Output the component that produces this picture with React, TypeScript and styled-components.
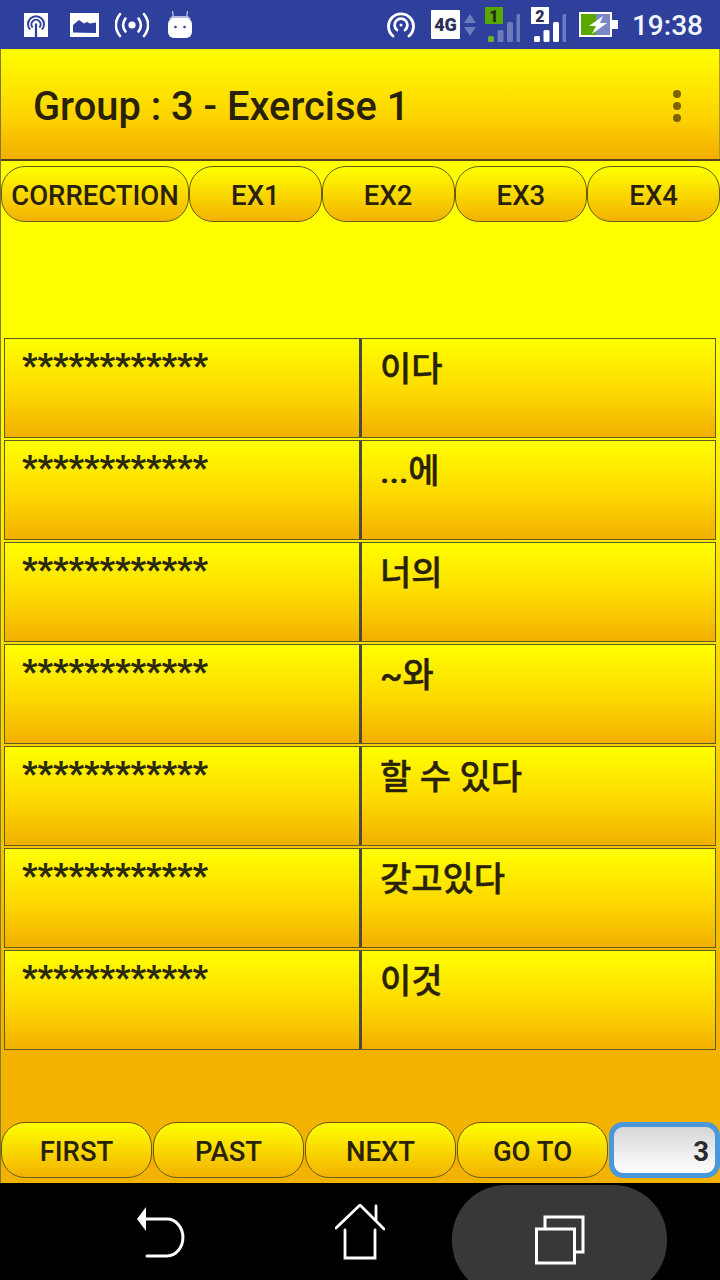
import React from 'react';
import styled, { createGlobalStyle } from 'styled-components';

const GlobalStyle = createGlobalStyle`
  html, body {
    margin: 0;
    padding: 0;
    background: #000;
  }
  * {
    box-sizing: border-box;
  }
`;

const YELLOW_DOWN = 'linear-gradient(180deg, #ffff00 0%, #fdd800 55%, #f2b000 100%)';
const KOREAN = '"Roboto", "Noto Sans CJK KR", sans-serif';

const rows = ['이다', '...에', '너의', '~와', '할 수 있다', '갖고있다', '이것'];
const tabs = ['EX1', 'EX2', 'EX3', 'EX4'];
const pager = ['FIRST', 'PAST', 'NEXT', 'GO TO'];

function HotspotSquare() {
  return (
    <StatusIcon $w={24} $h={24} $ml={24} viewBox="0 0 24 24">
      <rect width="24" height="24" fill="#fff" />
      <g fill="none" stroke="#2e3f9c" strokeWidth="2">
        <path d="M6 16.500a8 8 0 1 1 12 0" />
        <path d="M8.600 14.500a4.600 4.600 0 1 1 6.800 0" />
      </g>
      <path d="M12 10.500V24" stroke="#2e3f9c" strokeWidth="2.200" />
    </StatusIcon>
  );
}

function PictureIcon() {
  return (
    <StatusIcon $w={29} $h={24} $ml={22} viewBox="0 0 29 24">
      <rect width="29" height="24" fill="#fff" />
      <path d="M3 19.500V12l6-5 5 3.500 3-1.500 3 1.500 6-1v10.500z" fill="#2e3f9c" />
    </StatusIcon>
  );
}

function BroadcastIcon() {
  return (
    <StatusIcon $w={34} $h={26} $ml={16} viewBox="0 0 34 26">
      <circle cx="17" cy="13" r="3.600" fill="#fff" />
      <g fill="none" stroke="#fff" strokeWidth="2.600" strokeLinecap="round">
        <path d="M10.500 6.500c-3 4-3 9 0 13" />
        <path d="M23.500 6.500c3 4 3 9 0 13" />
        <path d="M5 2c-5.300 7-5.300 15 0 22" />
        <path d="M29 2c5.300 7 5.300 15 0 22" />
      </g>
    </StatusIcon>
  );
}

function AndroidIcon() {
  return (
    <StatusIcon $w={24} $h={28} $ml={19} viewBox="0 0 24 28">
      <path d="M5.500 6.500 4.500 0M18.500 6.500 19.500 0" stroke="#c8cdea" strokeWidth="1.200" />
      <path d="M4 5h16l3 3H1z" fill="#b4bbe2" />
      <rect y="7" width="24" height="20" rx="6" fill="#fff" />
      <circle cx="7.500" cy="16" r="1.300" fill="#2e3f9c" />
      <circle cx="16.500" cy="16" r="1.300" fill="#2e3f9c" />
    </StatusIcon>
  );
}

function WifiRingIcon() {
  return (
    <StatusIcon $w={28} $h={26} $ml={0} viewBox="0 0 28 26">
      <g fill="none" stroke="#fff" strokeWidth="2.800" strokeLinecap="round">
        <path d="M6 24a12.500 12.500 0 1 1 16 0" />
        <path d="M10 18a6.400 6.400 0 1 1 8 0" />
      </g>
      <circle cx="14" cy="13" r="1.500" fill="#fff" />
    </StatusIcon>
  );
}

function NetworkIcon() {
  return (
    <StatusIcon $w={45} $h={29} $ml={16} viewBox="0 0 45 29">
      <rect width="29" height="29" fill="#fff" rx="1" />
      <text x="14.500" y="21" textAnchor="middle" fontFamily="Roboto, sans-serif" fontWeight="900" fontSize="18" fill="#2a2f55">
        4G
      </text>
      <path d="M33 13 39 4l6 9zM33 17h12l-6 9z" fill="#6d7bbd" />
    </StatusIcon>
  );
}

function SimSignal({ sim, active, ml }: { sim: string; active?: boolean; ml: number }) {
  const heightOf = [6, 12, 20, 28];
  const filled = active ? 1 : 3;
  return (
    <StatusIcon $w={35} $h={36} $ml={ml} viewBox="0 0 35 36">
      <rect x="0" y="0" width="18" height="17" fill={active ? '#5aa700' : '#fff'} />
      <text x="9" y="14.500" textAnchor="middle" fontFamily="Roboto, sans-serif" fontWeight="900" fontSize="16" fill={active ? '#1f2f10' : '#2a2f55'}>
        {sim}
      </text>
      {heightOf.map((h, i) => (
        <rect
          key={h}
          x={3 + i * 9.500}
          y={35 - h}
          width="6"
          height={h}
          rx="1.500"
          fill={i < filled ? (active ? '#6cb52a' : '#fff') : '#6d7bbd'}
        />
      ))}
    </StatusIcon>
  );
}

function BatteryIcon() {
  return (
    <StatusIcon $w={39} $h={25} $ml={13} viewBox="0 0 39 25">
      <rect x="1" y="1" width="31" height="23" fill="#7c87c6" stroke="#fff" strokeWidth="2" />
      <rect x="2" y="2" width="15" height="21" fill="#5aa700" />
      <rect x="33" y="8" width="6" height="9" fill="#fff" />
      <path d="M24 4 10 14h7l-4 8 15-11h-7z" fill="#fff" />
    </StatusIcon>
  );
}

function BackGlyph() {
  return (
    <NavSvg width="48" height="53" viewBox="0 0 48 53">
      <path d="M0 14 9 2v24z" fill="#fff" />
      <path d="M8 14h22a15.500 18 0 0 1 0 37H10" fill="none" stroke="#fff" strokeWidth="3" strokeLinecap="round" />
    </NavSvg>
  );
}

function HomeGlyph() {
  return (
    <NavSvg width="50" height="56" viewBox="0 0 50 56">
      <g fill="none" stroke="#fff" strokeWidth="2.800" strokeLinecap="round">
        <path d="M1 24 25 1l24 24" />
        <path d="M41 2v14" />
        <path d="M10 26v28h30V26" />
      </g>
    </NavSvg>
  );
}

function RecentsGlyph() {
  return (
    <NavSvg width="50" height="50" viewBox="0 0 50 50">
      <g fill="none" stroke="#fff" strokeWidth="3">
        <rect x="1.500" y="14" width="38" height="34" />
        <path d="M10 13V2h38v35h-7" />
      </g>
    </NavSvg>
  );
}

export default function App() {
  return (
    <>
      <GlobalStyle />
      <Screen>
        <StatusBar>
          <StatusGroup>
            <HotspotSquare />
            <PictureIcon />
            <BroadcastIcon />
            <AndroidIcon />
          </StatusGroup>
          <StatusGroup>
            <WifiRingIcon />
            <NetworkIcon />
            <SimSignal sim="1" active ml={9} />
            <SimSignal sim="2" ml={11} />
            <BatteryIcon />
            <Clock>19:38</Clock>
          </StatusGroup>
        </StatusBar>

        <AppBody>
          <AppBar>
            <Title>Group : 3 - Exercise 1</Title>
            <OverflowMenu>
              <Dot />
              <Dot />
              <Dot />
            </OverflowMenu>
          </AppBar>

          <Content>
            <TabRow>
              <PillButton $wide>CORRECTION</PillButton>
              {tabs.map((tab) => (
                <PillButton key={tab}>{tab}</PillButton>
              ))}
            </TabRow>

            <Table>
              {rows.map((word) => (
                <Row key={word}>
                  <HiddenCell>************</HiddenCell>
                  <Divider />
                  <WordCell>{word}</WordCell>
                </Row>
              ))}
            </Table>

            <Pager>
              {pager.map((label) => (
                <PillButton key={label}>{label}</PillButton>
              ))}
              <PageInput>3</PageInput>
            </Pager>
          </Content>
        </AppBody>

        <NavBar>
          <NavSlot>
            <BackGlyph />
          </NavSlot>
          <NavSlot>
            <HomeGlyph />
          </NavSlot>
          <RecentsPill>
            <RecentsGlyph />
          </RecentsPill>
        </NavBar>
      </Screen>
    </>
  );
}

const Screen = styled.div`
  width: 720px;
  height: 1280px;
  display: flex;
  flex-direction: column;
  overflow: hidden;
  background: #000;
`;

const StatusBar = styled.div`
  height: 49px;
  flex: none;
  display: flex;
  justify-content: space-between;
  background: #2e3f9c;
  padding-right: 17px;
`;

const StatusGroup = styled.div`
  display: flex;
  align-items: center;
`;

const StatusIcon = styled.svg<{ $w: number; $h: number; $ml: number }>`
  flex: none;
  width: ${(p) => p.$w}px;
  height: ${(p) => p.$h}px;
  margin-left: ${(p) => p.$ml}px;
`;

const Clock = styled.span`
  margin-left: 14px;
  padding-top: 3px;
  color: #f4f5fb;
  font: 500 28px Roboto, sans-serif;
  line-height: 1;
`;

const AppBody = styled.div`
  height: 1134px;
  flex: none;
  display: flex;
  flex-direction: column;
  border-left: 1px solid #7d7a2a;
`;

const AppBar = styled.div`
  height: 112px;
  flex: none;
  display: flex;
  align-items: center;
  justify-content: space-between;
  padding: 4px 39px 0 32px;
  background: linear-gradient(180deg, #ffff00 0%, #fdd500 60%, #f3ae00 100%);
  border-bottom: 2px solid #54431a;
  box-shadow: inset -1px 0 0 #b09a20;
`;

const Title = styled.h1`
  margin: 0;
  color: #2a2208;
  font: 500 39.800px Roboto, sans-serif;
`;

const OverflowMenu = styled.div`
  display: flex;
  flex-direction: column;
  gap: 4px;
`;

const Dot = styled.span`
  width: 8px;
  height: 8px;
  border-radius: 50%;
  background: #7d6200;
`;

const Content = styled.div`
  flex: 1;
  min-height: 0;
  display: flex;
  flex-direction: column;
  background: linear-gradient(180deg, #ffff00 0%, #ffff00 18%, #f3b200 82%, #f3b200 100%);
`;

const TabRow = styled.div`
  display: flex;
  margin-top: 5px;
`;

const PillButton = styled.div<{ $wide?: boolean }>`
  flex: ${(p) => (p.$wide ? '0 0 188px' : '1 1 0')};
  height: 56px;
  display: flex;
  align-items: center;
  justify-content: center;
  padding-top: 2px;
  border: 1px solid #6a5a12;
  border-radius: 24px;
  background: linear-gradient(180deg, #ffff00 0%, #f3b200 100%);
  color: #2a2208;
  font: 500 27.500px Roboto, sans-serif;
  white-space: nowrap;
`;

const Table = styled.div`
  margin: 116px 4px 0 3px;
  display: flex;
  flex-direction: column;
  gap: 2px;
`;

const Row = styled.div`
  height: 100px;
  display: flex;
  border: 1px solid #5e5a20;
  background: ${YELLOW_DOWN};
`;

const HiddenCell = styled.div`
  flex: 0 0 354px;
  padding: 5px 0 0 17px;
  color: #2a2a08;
  font: 900 33.300px/44px Roboto, sans-serif;
`;

const Divider = styled.div`
  flex: none;
  width: 3px;
  background: #4a4a3a;
`;

const WordCell = styled.div`
  flex: 1 1 0;
  padding: 7px 0 0 18px;
  color: #2a2208;
  font: 500 34px/46px ${KOREAN};
  -webkit-text-stroke: 0.4px #2a2208;
`;

const Pager = styled.div`
  margin-top: auto;
  margin-bottom: 5px;
  display: flex;
  gap: 1px;
`;

const PageInput = styled.div`
  flex: 0 0 111px;
  height: 56px;
  display: flex;
  align-items: center;
  justify-content: flex-end;
  padding: 3px 6px 0 0;
  border: 5px solid #4a98dc;
  border-radius: 14px;
  background: linear-gradient(180deg, #d6d6d6 0%, #ffffff 100%);
  color: #2a2a2a;
  font: 700 27.500px Roboto, sans-serif;
`;

const NavBar = styled.div`
  flex: 1;
  display: flex;
  align-items: flex-start;
  padding: 0 53px 0 0;
`;

const NavSlot = styled.div`
  height: 97px;
  display: flex;
  align-items: center;
  justify-content: center;
  &:first-child {
    width: 322px;
  }
  &:nth-child(2) {
    width: 76px;
  }
`;

const RecentsPill = styled.div`
  margin-left: 54px;
  flex: 0 0 215px;
  height: 110px;
  margin-top: 2px;
  display: flex;
  align-items: flex-start;
  justify-content: center;
  padding-top: 30px;
  border-radius: 54px;
  background: #383838;
`;

const NavSvg = styled.svg`
  display: block;
  flex: none;
`;
